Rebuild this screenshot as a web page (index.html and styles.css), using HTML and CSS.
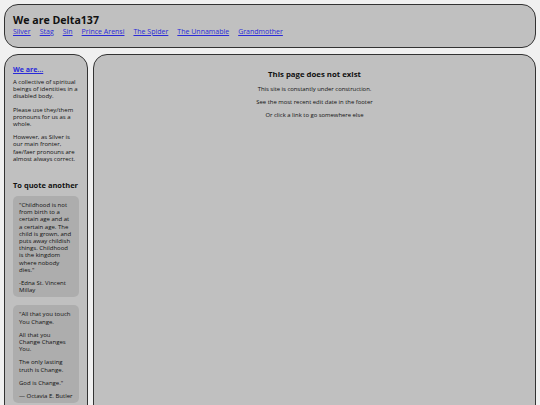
FILE: index.html
```html
<!DOCTYPE html>
<html lang="en">
<head>
<meta charset="utf-8">
<title>We are Delta137</title>
<link rel="stylesheet" href="styles.css">
</head>
<body>
<header class="header">
  <h1 class="title">We are Delta137</h1>
  <nav class="nav">
    <a href="#">Silver</a>
    <a href="#">Stag</a>
    <a href="#">Sin</a>
    <a href="#">Prince Arensi</a>
    <a href="#">The Spider</a>
    <a href="#">The Unnamable</a>
    <a href="#">Grandmother</a>
  </nav>
</header>
<div class="layout">
  <aside class="sidebar">
    <h2 class="side-title"><a href="#">We are...</a></h2>
    <p>A collective of spiritual beings of identities in a disabled body.</p>
    <p>Please use they/them pronouns for us as a whole.</p>
    <p>However, as Silver is our main fronter, fae/faer pronouns are almost always correct.</p>
    <h3 class="quote-title">To quote another</h3>
    <blockquote class="quote">
      <p>"Childhood is not from birth to a certain age and at a certain age. The child is grown, and puts away childish things. Childhood is the kingdom where nobody dies."</p>
      <p>-Edna St. Vincent Millay</p>
    </blockquote>
    <blockquote class="quote">
      <p>"All that you touch You Change.</p>
      <p>All that you Change Changes You.</p>
      <p>The only lasting truth is Change.</p>
      <p>God is Change."</p>
      <p class="attr">— Octavia E. Butler</p>
    </blockquote>
  </aside>
  <main class="main">
    <h2 class="main-title">This page does not exist</h2>
    <p>This site is constantly under construction.</p>
    <p>See the most recent edit date in the footer</p>
    <p>Or click a link to go somewhere else</p>
  </main>
</div>
</body>
</html>
```
FILE: styles.css
```css
html, body {
  margin: 0;
  padding: 0;
}
body {
  padding: 4px;
  background: #f0f0f0;
  font-family: "Open Sans", "DejaVu Sans", sans-serif;
  color: #111;
}
a {
  color: #2a2ad8;
}
.header {
  background: #c0c0c0;
  border: 1.5px solid #333;
  border-radius: 14px;
  padding: 8px 9px 8px 8px;
  height: 26px;
}
.title {
  margin: 0;
  font-size: 10.6px;
  line-height: 14px;
  font-weight: 700;
}
.nav {
  display: flex;
  gap: 9px;
  font-size: 7px;
  line-height: 10px;
}
.layout {
  display: flex;
  gap: 5px;
  margin-top: 6px;
  align-items: flex-start;
}
.sidebar {
  width: 66px;
  flex: none;
  background: #c0c0c0;
  border: 1.5px solid #333;
  border-radius: 14px;
  padding: 10px 8px 20px 8px;
  font-size: 6px;
  line-height: 7.2px;
}
.sidebar p {
  margin: 0 0 6px 0;
}
.side-title {
  margin: 0 0 5px 0;
  font-size: 7px;
  line-height: 9px;
  font-weight: 700;
}
.quote-title {
  margin: 17px 0 6px 0;
  font-size: 7.5px;
  line-height: 10px;
  font-weight: 700;
}
.quote {
  margin: 0 0 8px 0;
  background: #adadad;
  border-radius: 5px;
  padding: 6px 7px 3px 6px;
}
.sidebar .quote p {
  margin: 0 0 6px 0;
}
.sidebar .quote p:last-child {
  margin-bottom: 0;
}
.attr {
  white-space: nowrap;
}
.main {
  flex: 1;
  min-height: 420px;
  background: #c0c0c0;
  border: 1.5px solid #333;
  border-radius: 14px;
  text-align: center;
  padding: 14px 10px;
  font-size: 5.9px;
  line-height: 7px;
}
.main-title {
  margin: 0 0 6px 0;
  font-size: 7.8px;
  line-height: 11px;
  font-weight: 700;
}
.main p {
  margin: 0 0 6px 0;
}
```
